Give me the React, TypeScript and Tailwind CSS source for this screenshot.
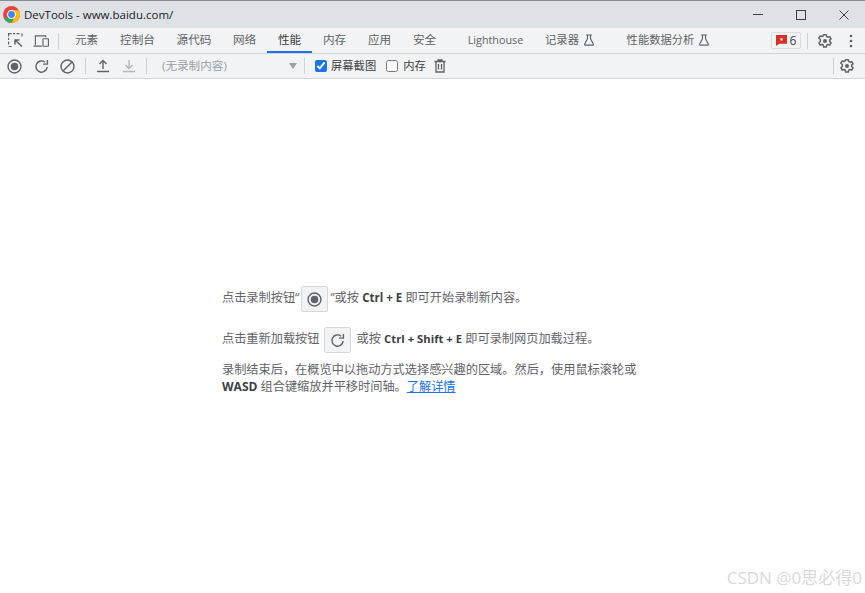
import React from "react";

const font = { fontFamily: '"Open Sans","Noto Sans CJK SC",sans-serif' };

function Flask({ className = "" }: { className?: string }) {
  return (
    <svg viewBox="0 0 12 12" width="12" height="12" className={className} fill="none" stroke="#5f6368" strokeWidth="1.1">
      <path d="M3 1h6M4.500 1v3.500L1.600 10.200a.6.6 0 0 0 .5.9h7.800a.6.6 0 0 0 .5-.9L7.500 4.500V1" />
    </svg>
  );
}

function Gear() {
  return (
    <svg viewBox="0 0 24 24" width="16" height="16" fill="none" stroke="#5f6368" strokeWidth="2.2" strokeLinejoin="round">
      <path d="M10 2.500h4l.6 2.800 1.800 1 2.700-.9 2 3.400-2.100 1.900v2.100l2.100 1.900-2 3.400-2.700-.9-1.800 1-.6 2.800h-4l-.6-2.800-1.800-1-2.700.9-2-3.400 2.100-1.900V9.700L2.700 7.800l2-3.400 2.700.9 1.800-1z" />
      <circle cx="12" cy="12" r="3" fill="#5f6368" stroke="none" />
    </svg>
  );
}

function Record({ size = 15 }: { size?: number }) {
  return (
    <svg viewBox="0 0 16 16" width={size} height={size} fill="none">
      <circle cx="8" cy="8" r="6.900" stroke="#5f6368" strokeWidth="1.500" />
      <circle cx="8" cy="8" r="4" fill="#5f6368" />
    </svg>
  );
}

function Reload({ size = 15 }: { size?: number }) {
  return (
    <svg viewBox="0 0 16 16" width={size} height={size} fill="none" stroke="#5f6368" strokeWidth="1.500">
      <path d="M14 8.500A6 6 0 1 1 11.800 3.400" />
      <path d="M14.300 1v4.500H9.800" />
    </svg>
  );
}

function Tab({ label, w, active, ml, size, children }: { label: string; w: number; active?: boolean; ml?: number; size?: string; children?: React.ReactNode }) {
  return (
    <div
      style={{ width: w, marginLeft: ml ?? 0 }}
      className={`flex h-[25px] shrink-0 items-center justify-center gap-[4px] border-b-2 pt-px whitespace-nowrap ${size ?? "text-[11.6px]"} ${active ? "border-[#1a73e8] text-[#3c4043]" : "border-transparent text-[#5f6368]"}`}
    >
      {label}
      {children}
    </div>
  );
}

export default function App() {
  return (
    <div style={font} className="flex h-[593px] w-[865px] flex-col overflow-hidden bg-white text-[#3c4043]">
      <header className="flex h-[28px] shrink-0 items-center border-t border-[#8a8c8f] bg-[#dee1e6] pl-[3px]">
        <svg viewBox="0 0 16 16" width="17" height="17">
          <circle cx="8" cy="8" r="8" fill="#ea4335" />
          <path d="M8 8 1.100 12A8 8 0 0 0 8 16l4-8z" fill="#34a853" />
          <path d="M8 16a8 8 0 0 0 6.900-12H8l4 4z" fill="#fbbc05" />
          <circle cx="8" cy="8" r="3.700" fill="#4285f4" stroke="#fff" strokeWidth="1" />
        </svg>
        <span className="ml-[4px] text-[11.5px] text-[#202124]">DevTools - www.baidu.com/</span>
        <div className="ml-auto flex items-center">
          <div className="flex w-[43px] justify-center">
            <div className="h-px w-[10px] bg-[#3c4043]" />
          </div>
          <div className="flex w-[43px] justify-center">
            <div className="h-[10px] w-[10px] border border-[#3c4043]" />
          </div>
          <div className="flex w-[43px] justify-center">
            <svg viewBox="0 0 10 10" width="10" height="10" stroke="#3c4043" strokeWidth="1">
              <path d="M.5.5l9 9M9.500.5l-9 9" />
            </svg>
          </div>
        </div>
      </header>

      <nav className="flex h-[25px] shrink-0 items-center bg-[#f1f3f4]">
        <div className="flex w-[30px] shrink-0 justify-center">
          <svg viewBox="0 0 15 15" width="15" height="15" fill="none" stroke="#5f6368" strokeWidth="1.200">
            <path d="M.6 3.500V.6h3M5 .6h2M8.500.6h3M14 .6v3M.6 5v2M.6 8.500v3M.6 13.500h3" />
            <path d="M14 13.500 7 7M7 11.500V7h4.500" strokeWidth="1.500" />
          </svg>
        </div>
        <div className="flex w-[22px] shrink-0 justify-center">
          <svg viewBox="0 0 17 14" width="16" height="14" fill="none" stroke="#5f6368" strokeWidth="1.200">
            <path d="M2.500 11.500V1.500h11V3M.5 12.500h9" />
            <rect x="10.600" y="4.600" width="5.800" height="8" rx=".5" />
          </svg>
        </div>
        <div className="ml-[6px] h-[16px] w-px shrink-0 bg-[#cdd0d4]" />
        <Tab label="元素" w={45} ml={5} />
        <Tab label="控制台" w={57} />
        <Tab label="源代码" w={56} />
        <Tab label="网络" w={45} />
        <Tab label="性能" w={45} active />
        <Tab label="内存" w={45} />
        <Tab label="应用" w={45} />
        <Tab label="安全" w={45} />
        <Tab label="Lighthouse" w={77} ml={10} size="text-[10.8px]" />
        <Tab label="记录器" w={72} ml={0} size="text-[11.3px]">
          <Flask />
        </Tab>
        <Tab label="性能数据分析" w={105} ml={10} size="text-[11.3px]">
          <Flask />
        </Tab>
        <div className="ml-[50px] flex h-[17px] w-[30px] shrink-0 items-center justify-center gap-[3px] rounded-[2px] border border-[#dadce0] text-[12px]">
          <svg viewBox="0 0 10 10" width="11" height="11">
            <path d="M0 0h10v8H3L0 10z" fill="#d93025" />
            <rect x="4" y="3" width="2" height="2" fill="#fff" />
          </svg>
          6
        </div>
        <div className="ml-[6px] h-[16px] w-px shrink-0 bg-[#cdd0d4]" />
        <div className="ml-[9px] flex shrink-0">
          <Gear />
        </div>
        <svg viewBox="0 0 4 14" width="4" height="14" className="ml-[16px] shrink-0" fill="#5f6368">
          <circle cx="2" cy="2" r="1.300" />
          <circle cx="2" cy="7" r="1.300" />
          <circle cx="2" cy="12" r="1.300" />
        </svg>
      </nav>

      <div className="flex h-[26px] shrink-0 items-center border-y border-[#d0d3d7] bg-[#f1f3f4]">
        <div className="ml-[7px] flex shrink-0">
          <Record />
        </div>
        <div className="ml-[12px] flex shrink-0">
          <Reload />
        </div>
        <svg viewBox="0 0 16 16" width="15" height="15" className="ml-[11px] shrink-0" fill="none" stroke="#5f6368" strokeWidth="1.500">
          <circle cx="8" cy="8" r="6.900" />
          <path d="M3.500 12.500l9-9" />
        </svg>
        <div className="ml-[10px] h-[16px] w-px shrink-0 bg-[#cdd0d4]" />
        <svg viewBox="0 0 14 14" width="14" height="14" className="ml-[10px] shrink-0" fill="none" stroke="#5f6368" strokeWidth="1.400">
          <path d="M7 10V2M3.500 5 7 1.500 10.500 5M1 12.500h12" />
        </svg>
        <svg viewBox="0 0 14 14" width="14" height="14" className="ml-[12px] shrink-0" fill="none" stroke="#b4b7bb" strokeWidth="1.400">
          <path d="M7 1v8M3.500 6 7 9.500 10.500 6M1 12.500h12" />
        </svg>
        <div className="ml-[10px] h-[16px] w-px shrink-0 bg-[#cdd0d4]" />
        <div className="ml-[15px] w-[127px] shrink-0 text-[11.6px] text-[#9aa0a6]">(无录制内容)</div>
        <div className="h-0 w-0 shrink-0 border-x-[4px] border-t-[6px] border-x-transparent border-t-[#9aa0a6]" />
        <div className="ml-[7px] h-[16px] w-px shrink-0 bg-[#cdd0d4]" />
        <input type="checkbox" defaultChecked className="ml-[10px] h-[12px] w-[12px] shrink-0 accent-[#1a73e8]" />
        <span className="ml-[4px] text-[11.3px] text-[#3c4043]">屏幕截图</span>
        <input type="checkbox" className="ml-[10px] h-[12px] w-[12px] shrink-0" />
        <span className="ml-[5px] text-[11.3px] text-[#3c4043]">内存</span>
        <svg viewBox="0 0 14 14" width="14" height="14" className="ml-[7px] shrink-0" fill="none" stroke="#5f6368" strokeWidth="1.300">
          <path d="M1.500 2.500h11M5 2.500V1h4v1.500M3 2.500V13h8V2.500M5.500 5v5.500M8.500 5v5.500" />
        </svg>
        <div className="ml-auto h-[16px] w-px shrink-0 bg-[#cdd0d4]" />
        <div className="mr-[10px] ml-[5px] flex shrink-0">
          <Gear />
        </div>
      </div>

      <main className="flex min-h-0 flex-1 flex-col pt-[207px] pl-[222px] text-[12.2px] text-[#5f6368]">
        <div className="flex h-[26px] items-center pb-[2px] whitespace-nowrap">
          点击录制按钮“
          <span className="mt-[2px] mr-[2px] ml-[2px] flex h-[26px] w-[27px] items-center justify-center rounded-[2px] border border-[#d5d7db] bg-[#f1f3f4]">
            <Record />
          </span>
          ”或按&nbsp;<b className="text-[11.5px] font-bold text-[#3c4043]">Ctrl + E</b>&nbsp;即可开始录制新内容。
        </div>
        <div className="mt-[15px] flex h-[26px] items-center pb-[2px] whitespace-nowrap">
          点击重新加载按钮
          <span className="mt-[2px] mr-[6px] ml-[4px] flex h-[26px] w-[27px] items-center justify-center rounded-[2px] border border-[#d5d7db] bg-[#f1f3f4]">
            <Reload />
          </span>
          或按&nbsp;<b className="text-[11.3px] font-bold text-[#3c4043]">Ctrl + Shift + E</b>&nbsp;即可录制网页加载过程。
        </div>
        <p className="mt-[8px] w-[430px] leading-[17px]">
          录制结束后，在概览中以拖动方式选择感兴趣的区域。然后，使用鼠标滚轮或
          <br />
          <b className="text-[12px] font-bold text-[#3c4043]">WASD</b> 组合键缩放并平移时间轴。
          <a className="text-[#1a73e8] underline">了解详情</a>
        </p>
        <div className="mt-auto mr-[3px] mb-[3px] self-end text-[17px] leading-[24px] text-[#d9d9d9]">CSDN @0思必得0</div>
      </main>
    </div>
  );
}
